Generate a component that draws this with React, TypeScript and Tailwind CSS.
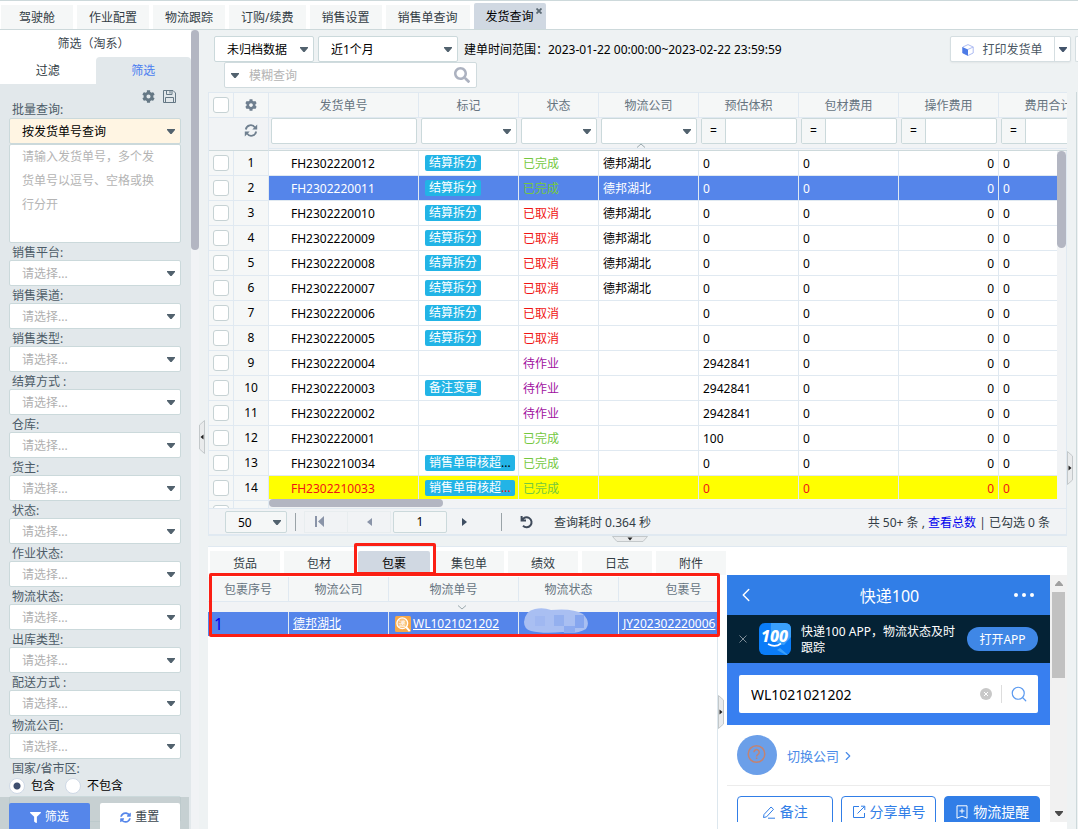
import React from 'react';
import { FaCog, FaFilter, FaSyncAlt, FaSearch } from 'react-icons/fa';
import { LuChevronLeft, LuSearch, LuChevronRight } from 'react-icons/lu';

const topTabs = ['驾驶舱', '作业配置', '物流跟踪', '订购/续费', '销售设置', '销售单查询'];
const filters = [
  '销售平台:', '销售渠道:', '销售类型:', '结算方式 :', '仓库:', '货主:',
  '状态:', '作业状态:', '物流状态:', '出库类型:', '配送方式 :', '物流公司:',
];

type Row = { no: string; tag?: string; more?: boolean; status: string; company?: string; volume: string };
const rows: Row[] = [
  { no: 'FH2302220012', tag: '结算拆分', status: '已完成', company: '德邦湖北', volume: '0' },
  { no: 'FH2302220011', tag: '结算拆分', status: '已完成', company: '德邦湖北', volume: '0' },
  { no: 'FH2302220010', tag: '结算拆分', status: '已取消', company: '德邦湖北', volume: '0' },
  { no: 'FH2302220009', tag: '结算拆分', status: '已取消', company: '德邦湖北', volume: '0' },
  { no: 'FH2302220008', tag: '结算拆分', status: '已取消', company: '德邦湖北', volume: '0' },
  { no: 'FH2302220007', tag: '结算拆分', status: '已取消', company: '德邦湖北', volume: '0' },
  { no: 'FH2302220006', tag: '结算拆分', status: '已取消', volume: '0' },
  { no: 'FH2302220005', tag: '结算拆分', status: '已取消', volume: '0' },
  { no: 'FH2302220004', status: '待作业', volume: '2942841' },
  { no: 'FH2302220003', tag: '备注变更', status: '待作业', volume: '2942841' },
  { no: 'FH2302220002', status: '待作业', volume: '2942841' },
  { no: 'FH2302220001', status: '已完成', volume: '100' },
  { no: 'FH2302210034', tag: '销售单审核超', more: true, status: '已完成', volume: '0' },
  { no: 'FH2302210033', tag: '销售单审核超', more: true, status: '已完成', volume: '0' },
];

const statusColor: Record<string, string> = {
  已完成: 'text-[#75c83f]',
  已取消: 'text-[#f01414]',
  待作业: 'text-[#a012a0]',
};

function Caret({ className = '' }: { className?: string }) {
  return (
    <svg aria-hidden="true" viewBox="0 0 8 5" className={`h-[5px] w-2 ${className}`}>
      <path d="M0 0H8V1L4.6 5H3.4L0 1Z" fill="currentColor" />
    </svg>
  );
}

function Select({ label, value, tone = 'text-black', box = 'bg-white', id, height = 'h-[26px]' }: {
  label: string; value: string; tone?: string; box?: string; id?: string; height?: string;
}) {
  return (
    <div className={`relative ${height}`}>
      <select
        id={id}
        aria-label={label}
        className={`h-full w-full appearance-none rounded-xs border border-[#cbd9db] pt-0.5 pr-4 pl-3 outline-none ${box} ${tone}`}
      >
        <option>{value}</option>
      </select>
      <Caret className="pointer-events-none absolute top-1/2 right-1.5 -mt-0.5 text-[#52626e]" />
    </div>
  );
}

function Check({ label }: { label: string }) {
  return (
    <input
      type="checkbox"
      aria-label={label}
      className="block size-4 appearance-none rounded-[3px] border border-[#c6d2d4] bg-white"
    />
  );
}

function Sidebar() {
  return (
    <aside className="relative flex w-[199px] shrink-0 overflow-hidden bg-[#f1f3f5]">
      <div className="flex w-[191px] flex-col bg-[#e2e8eb]">
        <div className="bg-white">
          <h1 className="h-[27px] pr-1 text-center leading-7 text-[#3b464e]">筛选（淘系）</h1>
          <div role="tablist" className="grid h-[27px] grid-cols-2">
            <button role="tab" className="text-[#2f3b43]">过滤</button>
            <button role="tab" className="rounded-t bg-[#e2e8eb] text-[#4a7df0]">筛选</button>
          </div>
        </div>
        <div className="flex h-5 items-center justify-end gap-2 pt-1 pr-[15px] text-[#657885]">
          <button aria-label="设置"><FaCog size={13} /></button>
          <button aria-label="保存">
            <svg aria-hidden="true" viewBox="0 0 13 13" className="size-[13px]" fill="none" stroke="currentColor">
              <path d="M.5.5H10L12.5 3V12.5H.5ZM3.5.5V4.5H9V.5M2.5 12.5V7.5H10.5V12.5M7 1V3.5" />
            </svg>
          </button>
        </div>
        <div className="pr-2.5 pl-[9px] text-[#4c5b67]">
          <label htmlFor="batch" className="block h-3.5 pl-[3px] leading-3">批量查询:</label>
          <Select id="batch" label="批量查询" value="按发货单号查询" box="bg-[#fff5e3]" />
          <textarea
            aria-label="发货单号"
            placeholder="请输入发货单号，多个发货单号以逗号、空格或换行分开"
            className="block h-[99px] w-full resize-none rounded-xs border border-[#cbd9db] bg-white pr-6 pl-3 leading-6 placeholder-[#b4b4b4] outline-none"
          />
          {filters.map((name) => (
            <div key={name}>
              <label htmlFor={name} className="block h-[17px] pl-[3px] leading-5">{name}</label>
              <Select id={name} label={name} value="请选择..." tone="text-[#b0b0b0]" />
            </div>
          ))}
          <fieldset>
            <legend className="h-[17px] pl-[3px] leading-5">国家/省市区:</legend>
            <div className="flex h-5 items-center text-black">
              <label className="flex w-14 items-center gap-1.5">
                <input type="radio" name="area" defaultChecked className="size-4 appearance-none rounded-full border border-[#cfd9e6] bg-white bg-[radial-gradient(#3f4f6f_3px,transparent_4px)]" />
                包含
              </label>
              <label className="flex items-center gap-1.5">
                <input type="radio" name="area" className="size-4 appearance-none rounded-full border border-[#cfd9e6] bg-white" />
                不包含
              </label>
            </div>
          </fieldset>
          <Select label="地区" value=" " box="bg-[#e3e8ea]" />
        </div>
      </div>
      <div className="absolute top-0 right-0 h-[220px] w-2 rounded-full bg-[#b3b6c2]" />
      <div className="absolute bottom-0 left-0 flex w-[189px] gap-2.5 bg-[#b4c0c2]/60 px-[9px] pt-1.5">
        <button className="flex h-[26px] flex-1 items-center justify-center gap-1 rounded-t-xs bg-[#5586ea] pt-0.5 text-white">
          <FaFilter size={11} />筛选
        </button>
        <button className="flex h-[26px] flex-1 items-center justify-center gap-1 rounded-t-xs bg-white pt-0.5 text-[#3b464e]">
          <FaSyncAlt size={11} className="text-[#5586ea]" />重置
        </button>
      </div>
    </aside>
  );
}

function Toolbar() {
  return (
    <div className="shrink-0 pt-1.5 pb-1 pl-1.5">
      <div className="flex items-center">
        <div className="w-[100px]"><Select label="归档" value="未归档数据" /></div>
        <div className="ml-1 w-[140px]"><Select label="时间" value="近1个月" /></div>
        <p className="ml-1.5 pt-0.5 text-black">建单时间范围：2023-01-22 00:00:00~2023-02-22 23:59:59</p>
        <div className="ml-auto flex h-[26px] rounded-xs border border-[#d5dee1] bg-white shadow-xs">
          <button className="flex w-[103px] items-center justify-center gap-2 pt-0.5 text-[#4a5763]">
            <svg aria-hidden="true" viewBox="0 0 12 12" className="size-3">
              <path d="M6 .6 11.2 3v6L6 11.5.8 9V3Z" fill="#fff" stroke="#aebcf2" />
              <path d="M.4 3 6 5.4v6.4L.4 9Z" fill="#4d7be6" />
              <path d="M6 5.4 11.3 3" stroke="#aebcf2" />
            </svg>
            打印发货单
          </button>
          <button aria-label="更多打印" className="flex w-4 items-center justify-center border-l border-[#d5dee1] text-[#43546b]"><Caret /></button>
        </div>
        <div className="ml-1 h-[26px] w-[3px] rounded-l-xs border border-r-0 border-[#d5dee1] bg-white" />
      </div>
      <div className="ml-2.5 flex h-[26px] w-[253px] items-center rounded-xs border border-[#d0dbde] bg-white px-1.5">
        <button aria-label="查询字段"><Caret className="text-[#52626e]" /></button>
        <input aria-label="模糊查询" placeholder="模糊查询" className="ml-2.5 min-w-0 flex-1 pt-0.5 placeholder-[#b4b4b4] outline-none" />
        <button aria-label="搜索"><FaSearch size={16} className="text-[#acb2c0]" /></button>
      </div>
    </div>
  );
}

const th = 'border-r border-b border-[#e0e9f1] bg-[#f5f7f7] px-0 pt-0.5 pb-0 font-normal';
const frozen = 'border-r border-b border-[#e0e9f1] bg-[#f5f7f7] p-0';
const ft = 'border-b border-[#cdd9db] bg-[#f1f3f5] p-0 font-normal align-top';
const ftInner = 'h-[31px] border-b border-[#e0e9f1] px-0.5';

function MainGrid() {
  return (
    <div className="relative min-h-0 flex-1 overflow-hidden border-t border-l border-[#e0e9f1] bg-[#f1f3f5]">
      <table className="w-[890px] table-fixed border-separate border-spacing-0">
        <colgroup>
          <col className="w-[25px]" /><col className="w-[35px]" /><col className="w-[150px]" />
          <col className="w-[100px]" /><col className="w-20" /><col className="w-[100px]" />
          <col className="w-[100px]" /><col className="w-[100px]" /><col className="w-[100px]" /><col className="w-[100px]" />
        </colgroup>
        <thead className="text-[#66747f]">
          <tr className="h-[25px]">
            <th className={frozen}><div className="pl-1"><Check label="全选" /></div></th>
            <th className={frozen}><FaCog size={12} className="mx-auto text-[#6f7f8f]" /></th>
            {['发货单号', '标记', '状态', '物流公司', '预估体积', '包材费用', '操作费用', '费用合计'].map((h) => (
              <th key={h} className={th}>{h}</th>
            ))}
          </tr>
          <tr className="h-[33px]">
            <td className={ft} />
            <td className={`${ft} border-r border-r-[#e0e9f1]`}>
              <svg aria-hidden="true" viewBox="0 0 14 13" className="mx-auto mt-1.5 h-[13px] w-3.5 text-[#6f7f8f]">
                <path d="M1.8 5.5A5 5 0 0 1 11 3.6M12.2 7.5A5 5 0 0 1 3 9.4" fill="none" stroke="currentColor" strokeWidth="1.8" />
                <path d="M13.2 .5V5.4H8.3ZM.8 12.5V7.6H5.7Z" fill="currentColor" />
              </svg>
            </td>
            <td className={ft}><div className={ftInner}>
              <input aria-label="发货单号" className="block h-[26px] w-[146px] rounded-xs border border-[#cbd9db] bg-white px-1 outline-none" />
            </div></td>
            {['标记', '状态', '物流公司'].map((n) => (
              <td key={n} className={ft}><div className={`relative ${ftInner}`}>
                <Select label={n} value="" />
                {n === '物流公司' && (
                  <svg aria-hidden="true" viewBox="0 0 10 5" className="absolute bottom-0 left-[37px] h-[5px] w-2.5"><path d="M1 4.5 5 1l4 3.5" fill="none" stroke="#9aa8ae" /></svg>
                )}
              </div></td>
            ))}
            {['预估体积', '包材费用', '操作费用', '费用合计'].map((n) => (
              <td key={n} className={ft}><div className={ftInner}>
                <div className="flex h-[26px] overflow-hidden rounded-xs border border-[#cbd9db] bg-white text-black">
                  <button className="w-6 shrink-0 border-r border-[#cbd9db] bg-[#f5f7f7]">=</button>
                  <input aria-label={n} className="min-w-0 flex-1 outline-none" />
                </div>
              </div></td>
            ))}
          </tr>
        </thead>
        <tbody>
          {rows.map((r, i) => {
            const tone = i === 1 ? 'bg-[#5585ea] text-white' : i === 13 ? 'bg-[#ffff00] text-[#f01414]' : 'bg-white text-black';
            const td = `border-r border-b border-[#e0e9f1] px-1 pt-0.5 pb-0 whitespace-nowrap ${tone}`;
            return (
              <tr key={r.no} className="h-[25px]">
                <td className={frozen}><div className="pl-1"><Check label={r.no} /></div></td>
                <td className={`${frozen} text-center text-black`}>{i + 1}</td>
                <td className={`${td} pl-[22px]`}>{r.no}</td>
                <td className={`border-r border-b border-[#e0e9f1] py-0 pl-1.5 whitespace-nowrap ${tone}`}>
                  {r.tag && (
                    <span className="block h-4 w-fit rounded-xs bg-[#22b4e6] px-1 leading-4">
                      <span className="text-white">{r.tag}</span>{r.more && '...'}
                    </span>
                  )}
                </td>
                <td className={td}><span className={statusColor[r.status]}>{r.status}</span></td>
                <td className={td}>{r.company}</td>
                <td className={td}>{r.volume}</td>
                <td className={td}>0</td>
                <td className={`${td} text-right`}>0</td>
                <td className={td}>0</td>
              </tr>
            );
          })}
          <tr className="h-[25px]">
            <td className={frozen}><div className="pl-1"><Check label="15" /></div></td>
            <td className={frozen} />
          </tr>
        </tbody>
      </table>
      <div className="absolute right-0 bottom-0 left-[60px] h-[9px] bg-[#f1f3f5]">
        <div className="h-2 w-[174px] rounded-full bg-[#b3b6c2]" />
      </div>
      <div className="absolute top-[58px] right-0 bottom-0 w-2.5 border-r border-[#e0e9f1] bg-[#f1f3f5]">
        <div className="h-[97px] rounded-full bg-[#b3b6c2]" />
      </div>
    </div>
  );
}

function Pager() {
  return (
    <div className="flex h-7 shrink-0 items-center border border-b-2 border-[#e0e9f1] bg-[#f1f3f5] px-4 text-[#333d45]">
      <div className="w-[62px]"><Select label="每页条数" value="50" height="h-[22px]" box="bg-[#f5f7f7]" /></div>
      <span className="ml-2 h-[18px] w-px bg-[#9aa3a8]" />
      <button aria-label="首页" className="ml-2 flex h-[22px] w-11 items-center border border-[#e8edef] pl-2.5 text-[#8a94a8]">
        <svg aria-hidden="true" viewBox="0 0 9 11" className="h-[11px] w-[9px]"><path d="M0 0H2V11H0ZM9 0V11L3 5.5Z" fill="currentColor" /></svg>
      </button>
      <button aria-label="上一页" className="flex h-[22px] w-[43px] items-center justify-center border border-l-0 border-[#e8edef] text-[#8a94a8]">
        <svg aria-hidden="true" viewBox="0 0 5 8" className="h-2 w-[5px]"><path d="M5 0V8L0 4Z" fill="currentColor" /></svg>
      </button>
      <input aria-label="页码" defaultValue="1" className="ml-0.5 h-[22px] w-[54px] rounded-xs border border-[#cbd9db] bg-[#f5f7f7] text-center text-black outline-none" />
      <button aria-label="下一页" className="flex w-[34px] justify-center text-[#3f4f63]">
        <svg aria-hidden="true" viewBox="0 0 5 8" className="h-2 w-[5px]"><path d="M0 0V8L5 4Z" fill="currentColor" /></svg>
      </button>
      <span className="ml-5 h-[18px] w-px bg-[#9aa3a8]" />
      <button aria-label="刷新" className="ml-[18px] text-[#3f4a5a]">
        <svg aria-hidden="true" viewBox="0 0 14 14" className="size-3.5"><path d="M1.6 1v4.4H6M2 5.2A5 5 0 1 1 3 10.8" fill="none" stroke="currentColor" strokeWidth="2" /></svg>
      </button>
      <span className="ml-5 pt-0.5">查询耗时 0.364 秒</span>
      <span className="ml-auto pt-0.5">
        共 50+ 条 , <a href="#count" className="text-[#0000ee]">查看总数</a> | 已勾选 0 条
      </span>
    </div>
  );
}

function SideHandle({ flip = false, className }: { flip?: boolean; className: string }) {
  return (
    <svg aria-hidden="true" viewBox="0 0 6 34" className={`absolute h-[34px] w-1.5 ${flip ? '-scale-x-100' : ''} ${className}`}>
      <path d="M5.5.5.5 5V29L5.5 33.5Z" fill="#e9ebec" stroke="#c3c8ca" />
      <path d="M4.5 14.5V19.5L1.5 17Z" fill="#222" />
    </svg>
  );
}

function PackageTable() {
  const cell = 'border-r border-[#e0e9f1] px-1 bg-[#5585ea] text-white';
  return (
    <div className="relative min-w-0 flex-1">
      <div className="h-full overflow-hidden border-r border-[#dde7ee] pt-0.5">
        <table className="w-[541px] table-fixed border-separate border-spacing-0">
          <colgroup>
            <col className="w-[81px]" /><col className="w-[100px]" /><col className="w-[130px]" /><col className="w-[100px]" /><col className="w-[130px]" />
          </colgroup>
          <thead className="text-[#66747f]">
            <tr className="h-[25px]">
              {['包裹序号', '物流公司', '物流单号', '物流状态', '包裹号'].map((h) => <th key={h} className={th}>{h}</th>)}
            </tr>
            <tr className="h-2.5 bg-[#f1f3f5]">
              <td colSpan={5} className="p-0">
                <svg aria-hidden="true" viewBox="0 0 10 5" className="ml-[249px] h-[5px] w-2.5"><path d="M1 .5 5 4 9 .5" fill="none" stroke="#9aa8ae" /></svg>
              </td>
            </tr>
          </thead>
          <tbody>
            <tr className="h-6">
              <td className={`${cell} py-0 pl-1.5 text-base leading-4`}><span className="text-[#0000ee]">1</span></td>
              <td className={cell}><a href="#company" className="underline">德邦湖北</a></td>
              <td className={cell}>
                <a href="#waybill" className="flex items-center gap-0.5 pl-0.5">
                  <svg aria-hidden="true" viewBox="0 0 16 16" className="size-4">
                    <rect width="16" height="16" rx="1.5" fill="#f7a848" />
                    <circle cx="7.3" cy="7.3" r="5.4" fill="#f9bd74" stroke="#fff" strokeWidth="1.3" />
                    <path d="m11.2 11.2 3.5 4" stroke="#fff" strokeWidth="2" />
                    <text x="7.3" y="9.8" textAnchor="middle" fontSize="7" fill="#fff">递</text>
                  </svg>
                  <span className="underline">WL1021021202</span>
                </a>
              </td>
              <td className={`${cell} relative`}>
                <svg aria-hidden="true" viewBox="0 0 66 26" className="absolute -top-1 left-1 h-[26px] w-[66px]">
                  <path d="M12 1Q20 -1 28 2Q50 0 60 6Q68 14 63 21Q52 27 40 24Q20 26 8 23Q1 21 1 14Q2 3 12 1Z" fill="#a9bff2" />
                  <path d="M12 8h10v10H12Z" fill="#a0b8f1" /><path d="M31 7h10v11H31Z" fill="#94b0ef" />
                  <path d="M41 18h11v7H41Z" fill="#8dabf0" /><path d="M52 7h9v13h-9Z" fill="#86a6ef" />
                </svg>
              </td>
              <td className={`${cell} whitespace-nowrap`}><a href="#package" className="underline">JY202302220006</a></td>
            </tr>
          </tbody>
        </table>
      </div>
      <div className="pointer-events-none absolute inset-x-0 -top-0.5 -right-0.5 ml-px h-16 rounded-xs border-3 border-[#fb1f14]" />
      <SideHandle flip className="top-[120px] -right-1.5" />
    </div>
  );
}

function Kuaidi() {
  const btn = 'flex h-8 flex-1 items-center justify-center gap-1 rounded border border-[#317ee7] text-sm leading-4';
  return (
    <div className="mb-[7px] ml-[9px] flex w-[340px] shrink-0 overflow-hidden">
      <div className="min-w-0 flex-1">
        <div className="flex h-10 items-center justify-between bg-[#317ee7] pr-4 pl-2 text-white">
          <button aria-label="返回"><LuChevronLeft size={22} strokeWidth={1.6} /></button>
          <h2 className="pt-0.5 pl-2 text-base">快递100</h2>
          <button aria-label="菜单" className="flex gap-1">
            <i className="size-1 rounded-full bg-white" /><i className="size-1 rounded-full bg-white" /><i className="size-1 rounded-full bg-white" />
          </button>
        </div>
        <div className="flex h-12 items-center bg-[#042235] px-3 text-white">
          <button aria-label="关闭">
            <svg aria-hidden="true" viewBox="0 0 8 8" className="size-2"><path d="m.5.5 7 7m0-7-7 7" stroke="#7f8d97" /></svg>
          </button>
          <svg aria-label="100" viewBox="0 0 32 32" className="ml-3 size-8 shrink-0">
            <rect width="32" height="32" rx="6" fill="#0a7cf8" />
            <path d="M12 0H26Q32 0 32 6V14L25 22Q10 20 12 0Z" fill="#3aa0fb" />
            <path d="m21 25 8 7h-2l-9-5Z" fill="#3aa0fb" />
            <text x="15.5" y="19" textAnchor="middle" fontSize="16" fontWeight="800" fontStyle="italic" fill="#fff">100</text>
            <path d="M9 21q7 4 13-.5" fill="none" stroke="#fff" strokeWidth="1.6" />
          </svg>
          <p className="ml-2.5 flex-1 pt-0.5 pr-3 leading-4">快递100 APP，物流状态及时跟踪</p>
          <button className="h-6 w-[71px] shrink-0 rounded-full bg-[#3f87e6] pt-0.5">打开APP</button>
        </div>
        <div className="bg-[#387ff0] p-3">
          <div className="flex h-[38px] items-center rounded-xs bg-white pr-2.5 pl-3">
            <input aria-label="运单号" defaultValue="WL1021021202" className="min-w-0 flex-1 pt-0.5 text-sm text-black outline-none" />
            <button aria-label="清空">
              <svg aria-hidden="true" viewBox="0 0 12 12" className="size-3"><circle cx="6" cy="6" r="6" fill="#c8c8c8" /><path d="m4 4 4 4m0-4-4 4" stroke="#fff" /></svg>
            </button>
            <span className="mr-2 ml-[9px] h-[18px] w-px bg-[#ddd]" />
            <button aria-label="查询"><LuSearch size={18} strokeWidth={1.6} className="text-[#5b9af0]" /></button>
          </div>
        </div>
        <div className="flex h-[61px] items-center border-b border-[#ececec] pl-2.5">
          <svg aria-hidden="true" viewBox="0 0 40 40" className="size-10">
            <circle cx="20" cy="20" r="20" fill="#6b9fe9" />
            <g fill="none" stroke="#c38372" strokeWidth="1.5"><circle cx="19.5" cy="19" r="8.3" /><path d="M17 17.3a2.6 2.6 0 1 1 4 2.1c-1 .7-1.4 1-1.4 2.2M19.6 22.5v1.6" /></g>
          </svg>
          <button className="ml-2.5 flex items-center pt-0.5 text-[13px] text-[#4a8be8]">切换公司<LuChevronRight size={14} className="ml-0.5" /></button>
        </div>
        <div className="flex gap-2 bg-white px-2.5 pt-2.5">
          <button className={`${btn} bg-white text-[#317ee7]`}>
            <svg aria-hidden="true" viewBox="0 0 14 14" className="size-3.5" fill="none" stroke="currentColor"><path d="M2 9.5 9 2l2.5 2.3-7 7.6-3 .6ZM6 13.2h7" /></svg>备注
          </button>
          <button className={`${btn} bg-white text-[#317ee7]`}>
            <svg aria-hidden="true" viewBox="0 0 14 14" className="size-3.5" fill="none" stroke="currentColor"><path d="M7 1.5H1.5v11h11V8M5.5 8.5l7-7M9 1.2h3.8V5" /></svg>分享单号
          </button>
          <button className={`${btn} bg-[#317ee7] text-white`}>
            <svg aria-hidden="true" viewBox="0 0 14 14" className="size-3.5" fill="none" stroke="currentColor"><path d="M2 .8h10v12.4L7 11.2 2 13.2ZM7 3.5v5M4.5 6h5" /></svg>物流提醒
          </button>
        </div>
      </div>
      <div className="flex w-[17px] flex-col items-center justify-between bg-[#f1f1f1] py-1.5">
        <Caret className="rotate-180 text-[#a0a0a0]" />
        <div className="mt-1.5 mb-auto h-[86px] w-[13px] bg-[#c1c1c1]" />
        <Caret className="text-[#4a4a4a]" />
      </div>
    </div>
  );
}

export default function App() {
  return (
    <div className="flex h-screen flex-col overflow-hidden bg-[#eef2f3] font-['Noto_Sans','Noto_Sans_CJK_SC',sans-serif] text-xs leading-4">
      <nav className="flex h-[30px] shrink-0 items-end gap-1 border-y border-[#cdd9db] bg-white pl-px text-[#333d45]">
        {topTabs.map((t) => (
          <button key={t} className="h-6 min-w-[72px] bg-[#f5f7f7] px-3 pt-0.5">{t}</button>
        ))}
        <button className="relative h-[26px] min-w-[72px] rounded-t-xs bg-[#d0d8e2] px-3 pt-0.5 text-black">
          发货查询
          <svg aria-hidden="true" viewBox="0 0 6 6" className="absolute top-[5px] right-1 size-1.5"><path d="m.5.5 5 5m0-5-5 5" stroke="#5a6872" strokeWidth="1.8" /></svg>
        </button>
      </nav>
      <div className="flex min-h-0 flex-1">
        <Sidebar />
        <div className="relative w-[9px] shrink-0"><SideHandle className="top-[390px] left-0" /></div>
        <main className="flex min-w-0 flex-1 flex-col">
          <Toolbar />
          <div className="relative mr-[11px] flex min-h-0 flex-1 flex-col">
            <MainGrid />
            <Pager />
            <SideHandle flip className="top-[359px] -right-1.5" />
            <div className="absolute top-0 -right-2.5 -bottom-[293px] w-px bg-[#cdd9db]" />
          </div>
          <div className="flex h-2.5 shrink-0 justify-center pr-[26px]">
            <svg aria-hidden="true" viewBox="0 0 36 6" className="h-1.5 w-9"><path d="M.5.5H35.5L31 5.5H5Z" fill="#e9ebec" stroke="#c3c8ca" /><path d="M15.5 1.5h5L18 4.5Z" fill="#222" /></svg>
          </div>
          <section className="mr-[11px] flex h-[283px] shrink-0 flex-col border-t border-[#e0e9f1] bg-white">
            <div role="tablist" className="flex h-7 shrink-0 items-end gap-1 pl-0.5 text-[#333d45]">
              {['货品', '包材', '包裹', '集包单', '绩效', '日志', '附件'].map((t) =>
                t === '包裹' ? (
                  <button key={t} role="tab" className="relative h-6 w-[72px] rounded-t-xs bg-[#d0d8e2] pt-0.5 text-black">
                    {t}
                    <span className="pointer-events-none absolute -top-2 -right-1.5 bottom-0 -left-1 rounded-xs border-3 border-[#fb1f14]" />
                  </button>
                ) : (
                  <button key={t} role="tab" className="h-6 w-[70px] bg-[#f5f7f7] pt-0.5">{t}</button>
                ),
              )}
            </div>
            <div className="flex min-h-0 flex-1">
              <PackageTable />
              <Kuaidi />
            </div>
          </section>
        </main>
      </div>
    </div>
  );
}
